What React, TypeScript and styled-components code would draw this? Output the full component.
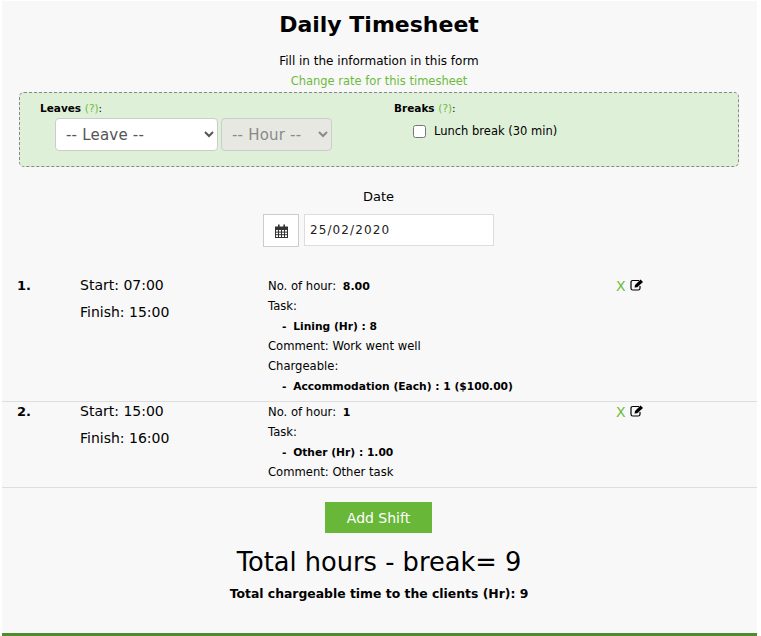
import React from 'react';
import styled, { createGlobalStyle } from 'styled-components';

const GlobalStyle = createGlobalStyle`
    html, body {
        margin: 0;
        padding: 0;
        background: #fff;
    }
    body {
        font-family: "DejaVu Sans", "Liberation Sans", sans-serif;
        color: #000;
        overflow: hidden;
    }
`;

const Page = styled.div`
    width: 755px;
    height: 635px;
    margin: 1px 0 0 2px;
    background: #f8f8f8;
    display: flex;
    flex-direction: column;
    border-bottom: 3px solid #4f8a2f;
    box-sizing: border-box;
`;

const Title = styled.h1`
    margin: 9px 0 0;
    font-size: 22px;
    line-height: 30px;
    font-weight: bold;
    text-align: center;
    padding-right: 1px;
`;

const Intro = styled.p`
    margin: 11px 0 0;
    font-size: 12px;
    line-height: 20px;
    text-align: center;
    padding-right: 1px;
`;

const RateLink = styled.a`
    display: block;
    font-size: 11.5px;
    line-height: 20px;
    text-align: center;
    color: #6cbb3c;
    padding-right: 1px;
`;

const OptionsPanel = styled.div`
    display: grid;
    grid-template-columns: 354px 1fr;
    margin: 1px 18px 0 17px;
    height: 75px;
    box-sizing: border-box;
    border: 1px dashed #888;
    border-radius: 5px;
    background: #dff0d8;
    padding: 7px 20px 0;
`;

const GroupLabel = styled.div`
    font-size: 10.5px;
    line-height: 16px;
    font-weight: bold;
`;

const Hint = styled.span`
    font-weight: normal;
    color: #6cbb3c;
`;

const Colon = styled.span`
    font-weight: normal;
`;

const SelectRow = styled.div`
    display: flex;
    gap: 3px;
    margin: 2px 0 0 15px;
`;

const Select = styled.select<{ $width: number }>`
    width: ${p => p.$width}px;
    height: 33px;
    box-sizing: border-box;
    border: 1px solid #ccc;
    border-radius: 4px;
    background-color: #fff;
    color: #555;
    font-family: inherit;
    font-size: 15px;
    letter-spacing: 0.2px;
    padding: 0 6px;

    &:disabled {
        background-color: #e6e8e1;
        color: #8a8a8a;
        opacity: 1;
    }
`;

const CheckLabel = styled.label`
    display: flex;
    align-items: center;
    gap: 8px;
    margin: 5px 0 0 19px;
    font-size: 11.5px;
    line-height: 20px;
`;

const Checkbox = styled.input`
    width: 13px;
    height: 13px;
    margin: 0;
`;

const DateLabel = styled.div`
    margin-top: 20px;
    font-size: 13px;
    line-height: 20px;
    text-align: center;
    padding-right: 2px;
`;

const DateRow = styled.div`
    display: flex;
    justify-content: center;
    gap: 5px;
    margin-top: 7px;
    padding-right: 2px;
`;

const CalendarButton = styled.span`
    display: flex;
    align-items: center;
    justify-content: center;
    width: 36px;
    height: 33px;
    box-sizing: border-box;
    border: 1px solid #ccc;
    background: #fff;
`;

const DateInput = styled.input`
    width: 190px;
    height: 32px;
    box-sizing: border-box;
    border: 1px solid #ddd;
    background: #fff;
    padding: 0 5px;
    font-family: inherit;
    font-size: 12px;
    letter-spacing: 1.1px;
    color: #222;
`;

const ShiftList = styled.div`
    margin-top: 29px;
`;

const ShiftRow = styled.div`
    display: grid;
    grid-template-columns: 63px 188px 348px 1fr;
    padding: 0 0 5px 15px;
    border-bottom: 1px solid #ddd;
`;

const ShiftNumber = styled.div`
    font-size: 13px;
    line-height: 20px;
    font-weight: bold;
`;

const TimeCell = styled.div`
    font-size: 14px;
    line-height: 27px;
    margin-top: -4px;
`;

const Details = styled.div`
    font-size: 11.6px;
    line-height: 20px;
`;

const HoursValue = styled.b`
    font-size: 11px;
    line-height: 0;
    margin-left: 3px;
`;

const Indented = styled.div`
    height: 20px;
    padding-left: 14px;
    font-size: 10.7px;
    line-height: 22px;
    font-weight: bold;
`;

const Dash = styled.span`
    margin-right: 3px;
`;

const Actions = styled.div`
    display: flex;
    align-items: center;
    gap: 4px;
    height: 19px;
    font-size: 14px;
    color: #6cbb3c;

    svg {
        margin-top: -1px;
    }
`;

const AddShift = styled.button`
    display: block;
    margin: 14px auto 0;
    width: 107px;
    height: 31px;
    border: none;
    background: #68b738;
    color: #fff;
    font-family: inherit;
    font-size: 14px;
    position: relative;
    left: -1px;
`;

const Total = styled.h2`
    margin: 14px 0 0;
    font-size: 25.7px;
    line-height: 30px;
    font-weight: normal;
    text-align: center;
    padding-right: 1px;
`;

const Chargeable = styled.div`
    margin-top: 7px;
    font-size: 12.4px;
    line-height: 20px;
    font-weight: bold;
    text-align: center;
    padding-right: 1px;
`;

const CalendarIcon = () => (
    <svg width="13" height="14" viewBox="0 0 13 14">
        <path d="M0 2.5h13V14H0z" fill="#333" />
        <path d="M3 0.5h1.6v3H3zM8.4 0.5H10v3H8.4z" fill="#333" />
        <g fill="#fff">
            <rect x="1" y="6" width="2" height="1.6" />
            <rect x="4" y="6" width="2" height="1.6" />
            <rect x="7" y="6" width="2" height="1.6" />
            <rect x="10" y="6" width="2" height="1.6" />
            <rect x="1" y="8.6" width="2" height="1.6" />
            <rect x="4" y="8.6" width="2" height="1.6" />
            <rect x="7" y="8.6" width="2" height="1.6" />
            <rect x="10" y="8.6" width="2" height="1.6" />
            <rect x="1" y="11.2" width="2" height="1.8" />
            <rect x="4" y="11.2" width="2" height="1.8" />
            <rect x="7" y="11.2" width="2" height="1.8" />
            <rect x="10" y="11.2" width="2" height="1.8" />
        </g>
    </svg>
);

const EditIcon = () => (
    <svg width="14" height="12" viewBox="0 0 14 12">
        <path d="M9 1.5H2.8Q1 1.5 1 3.3V9.2Q1 11 2.8 11H8.2Q10 11 10 9.2V7" fill="none" stroke="#000" strokeWidth="1.2" />
        <path d="M4.5 8.5L5 6L10.6 0.6L13 3L7.3 8.2z" fill="#000" />
    </svg>
);

type Shift = {
    start: string;
    finish: string;
    hours: string;
    task: string;
    comment: string;
    chargeable?: string;
};

const shifts: Shift[] = [
    { start: '07:00', finish: '15:00', hours: '8.00', task: 'Lining (Hr) : 8', comment: 'Work went well', chargeable: 'Accommodation (Each) : 1 ($100.00)' },
    { start: '15:00', finish: '16:00', hours: '1', task: 'Other (Hr) : 1.00', comment: 'Other task' },
];

const App = () => {
    return (
        <Page>
            <GlobalStyle />
            <Title>Daily Timesheet</Title>
            <Intro>Fill in the information in this form</Intro>
            <RateLink>Change rate for this timesheet</RateLink>
            <OptionsPanel>
                <div>
                    <GroupLabel>Leaves <Hint>(?)</Hint><Colon>:</Colon></GroupLabel>
                    <SelectRow>
                        <Select $width={163}><option>-- Leave --</option></Select>
                        <Select $width={111} disabled><option>-- Hour --</option></Select>
                    </SelectRow>
                </div>
                <div>
                    <GroupLabel>Breaks <Hint>(?)</Hint><Colon>:</Colon></GroupLabel>
                    <CheckLabel><Checkbox type="checkbox" />Lunch break (30 min)</CheckLabel>
                </div>
            </OptionsPanel>
            <DateLabel>Date</DateLabel>
            <DateRow>
                <CalendarButton><CalendarIcon /></CalendarButton>
                <DateInput defaultValue="25/02/2020" />
            </DateRow>
            <ShiftList>
                {shifts.map((s, i) => (
                    <ShiftRow key={i}>
                        <ShiftNumber>{i + 1}.</ShiftNumber>
                        <TimeCell>
                            <div>Start: {s.start}</div>
                            <div>Finish: {s.finish}</div>
                        </TimeCell>
                        <Details>
                            <div>No. of hour: <HoursValue>{s.hours}</HoursValue></div>
                            <div>Task:</div>
                            <Indented><Dash>-</Dash> {s.task}</Indented>
                            <div>Comment: {s.comment}</div>
                            {s.chargeable && <div>Chargeable:</div>}
                            {s.chargeable && <Indented><Dash>-</Dash> {s.chargeable}</Indented>}
                        </Details>
                        <Actions>X<EditIcon /></Actions>
                    </ShiftRow>
                ))}
            </ShiftList>
            <AddShift>Add Shift</AddShift>
            <Total>Total hours - break= 9</Total>
            <Chargeable>Total chargeable time to the clients (Hr): 9</Chargeable>
        </Page>
    );
};

export default App;
